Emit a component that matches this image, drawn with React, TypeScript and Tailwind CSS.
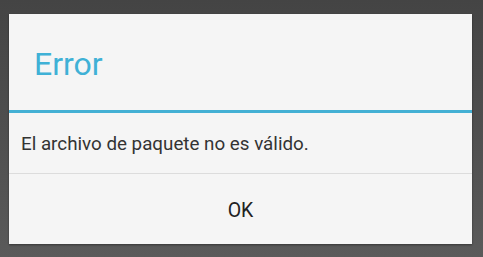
export default function App() {
  return (
    <div className="w-[483px] h-[257px] overflow-hidden bg-gradient-to-b from-[#444444] to-[#5a5a5a] pt-[14px] pl-[9px] font-['Roboto',sans-serif]">
      <div className="w-[463px] h-[230px] bg-[#f5f5f5] flex flex-col shadow-[0_1px_2px_rgba(0,0,0,0.4)]">
        {/* Title */}
        <div className="h-[96px] flex items-center pl-[25px] pt-[3px]">
          <h1 className="text-[32px] leading-none text-[#3fb1d6]">Error</h1>
        </div>
        <div className="h-[3px] bg-[#44b0d4]" />
        {/* Message */}
        <div className="h-[60px] flex items-center pl-[12px] pt-[3px]">
          <p className="text-[18.8px] text-[#333333]">El archivo de paquete no es válido.</p>
        </div>
        <div className="h-px bg-[#dcdcdc]" />
        {/* Button */}
        <button className="flex-1 flex items-center justify-center pt-[3px] text-[19.5px] text-[#222222]">
          OK
        </button>
      </div>
    </div>
  );
}
